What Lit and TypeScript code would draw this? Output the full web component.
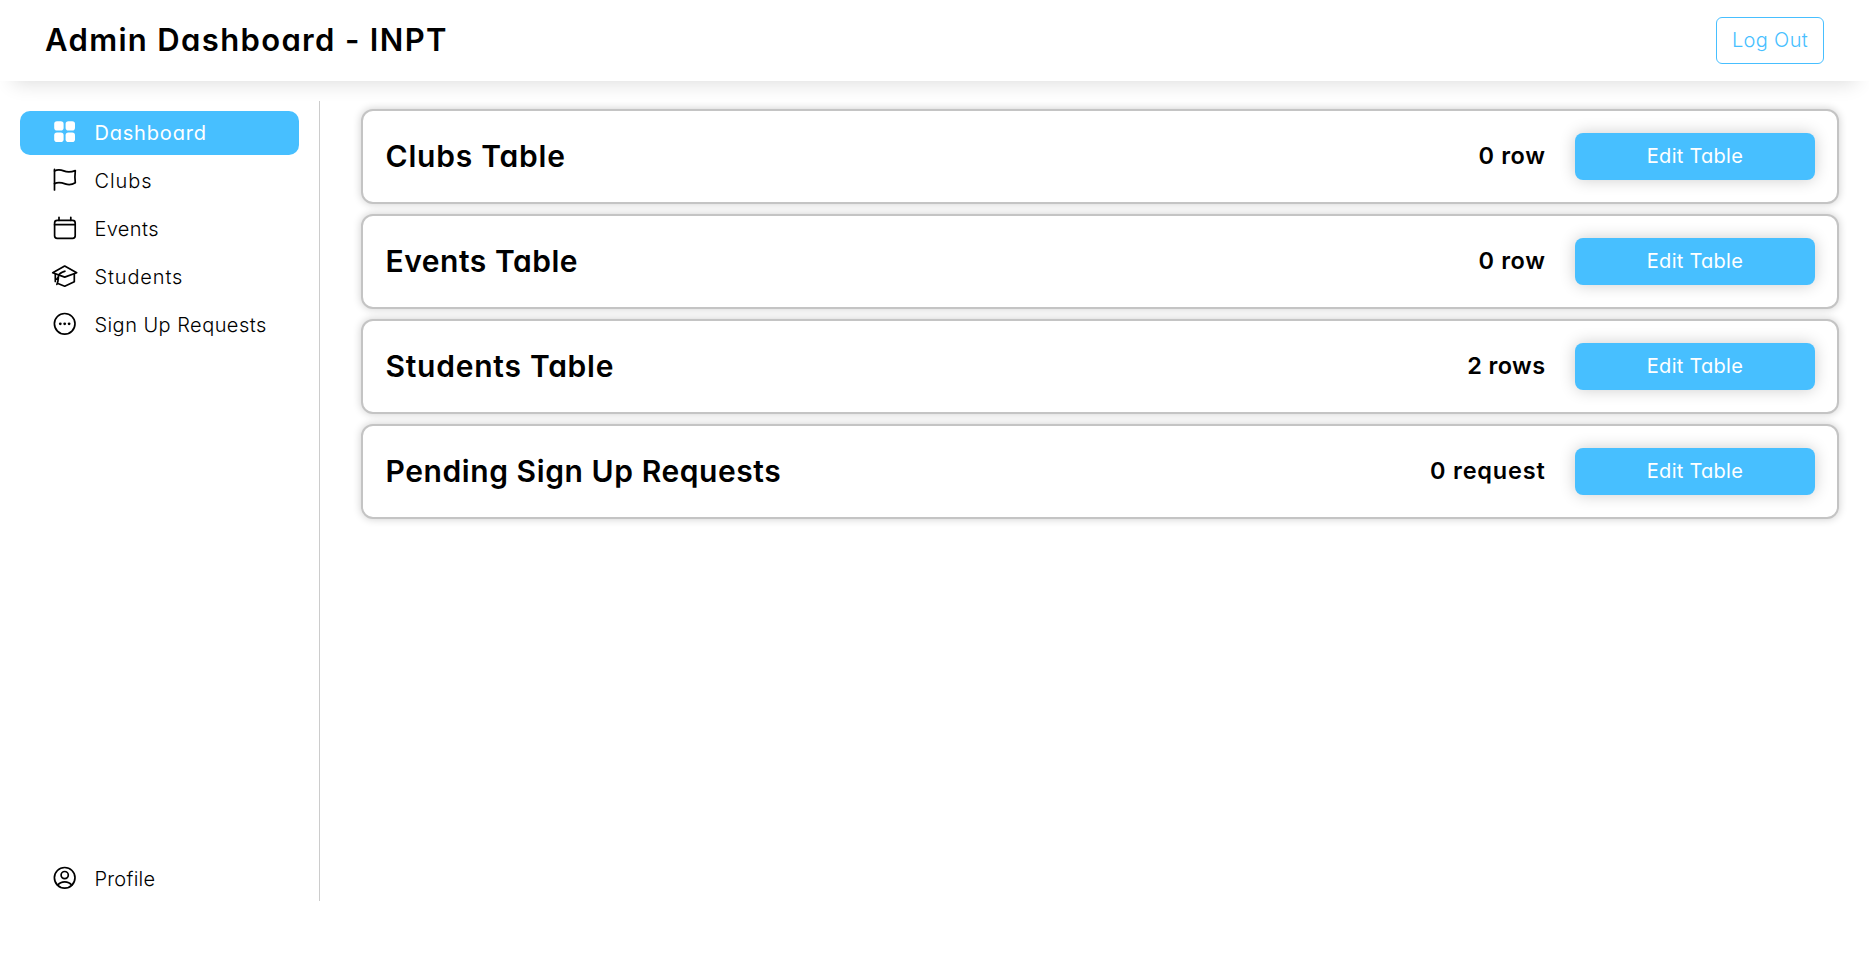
import { LitElement, html, css, svg, nothing } from "lit";
import { customElement, property, state } from "lit/decorators.js";
import { classMap } from "lit/directives/class-map.js";

type IconName = "grid" | "flag" | "calendar" | "cap" | "dots" | "user";

interface NavItem {
  label: string;
  icon: IconName;
  tracking: number;
}

interface TableSummary {
  title: string;
  count: string;
  tracking: number;
  countTracking: number;
}

const NAV: NavItem[] = [
  { label: "Dashboard", icon: "grid", tracking: 0.83 },
  { label: "Clubs", icon: "flag", tracking: 0.95 },
  { label: "Events", icon: "calendar", tracking: 0.4 },
  { label: "Students", icon: "cap", tracking: 0.87 },
  { label: "Sign Up Requests", icon: "dots", tracking: 0.46 },
];

const PROFILE: NavItem = { label: "Profile", icon: "user", tracking: 0.27 };

const TABLES: TableSummary[] = [
  { title: "Clubs Table", count: "0 row", tracking: 0.78, countTracking: 0.6 },
  { title: "Events Table", count: "0 row", tracking: 0.53, countTracking: 0.6 },
  { title: "Students Table", count: "2 rows", tracking: 0.75, countTracking: 0.4 },
  { title: "Pending Sign Up Requests", count: "0 request", tracking: 0.58, countTracking: 0.8 },
];

const ICONS = {
  grid: svg`
    <g fill="currentColor" stroke="none">
      <rect x="1.5" y="1.4" width="9.4" height="9.4" rx="2.8" />
      <rect x="12.9" y="1.4" width="9.4" height="9.4" rx="2.8" />
      <rect x="1.5" y="12.8" width="9.4" height="9.4" rx="2.8" />
      <rect x="12.9" y="12.8" width="9.4" height="9.4" rx="2.8" />
    </g>`,
  flag: svg`
    <path d="M1.8 1.6V22.2" />
    <path d="M1.8 3.1C4.6 1.7 8 1.9 11 3.1C14.5 4.6 18.5 4.4 22.6 2.8C22.1 6.8 22.1 10.8 22.6 14.9C19.5 16.9 16 17.3 12.5 16.1C8.5 14.7 5 14.4 1.8 15.8" />`,
  calendar: svg`
    <rect x="1.9" y="4.5" width="20.6" height="18.1" rx="2.6" />
    <path d="M1.9 8.9H22.5M6.3 1.5V4.5M18.1 1.5V4.5" />`,
  cap: svg`
    <path d="M12 2.2L24 8.9L12 13.3L0 8.9Z" />
    <path d="M2.6 10V17.6M5.8 20L12 22.4L21.6 18V10" />
    <path d="M12.2 7.4C9.4 8.4 6.8 9.2 5.9 11.6C5.4 14.4 5.9 17.4 4.2 20.6M5.9 12.6L4 15.4" />`,
  dots: svg`
    <circle cx="12" cy="12" r="10.3" />
    <g fill="currentColor" stroke="none">
      <circle cx="7.6" cy="12" r="1.4" /><circle cx="12" cy="12" r="1.4" /><circle cx="16.4" cy="12" r="1.4" />
    </g>`,
  user: svg`
    <circle cx="12" cy="12" r="10.3" />
    <circle cx="12" cy="9.3" r="3.6" />
    <path d="M4.9 19.4C6.6 17.2 9 16 12 16S17.4 17.2 19.1 19.4" />`,
};

@customElement("nav-link")
class NavLink extends LitElement {
  @property({ attribute: false }) item: NavItem = PROFILE;
  @property({ type: Boolean }) active = false;

  static styles = css`
    :host { display: block; }
    .link {
      box-sizing: border-box;
      height: 44px;
      padding-left: 33px;
      display: flex;
      align-items: center;
      gap: 17.4px;
      border-radius: 10px;
      color: #000;
      font-weight: 350;
      cursor: pointer;
    }
    .link.active {
      background: #47bfff;
      color: #fff;
      font-weight: 400;
    }
    .icon {
      flex: none;
      width: 24px;
      height: 24px;
      margin-bottom: 2px;
      overflow: visible;
      fill: none;
      stroke: currentColor;
      stroke-width: 1.7;
      stroke-linecap: round;
      stroke-linejoin: round;
    }
    .label { white-space: nowrap; }
  `;

  render() {
    return html`
      <a class=${classMap({ link: true, active: this.active })} aria-current=${this.active ? "page" : nothing}>
        <svg class="icon" viewBox="0.3 0.2 24 24">${ICONS[this.item.icon]}</svg>
        <span class="label" style="letter-spacing:${this.item.tracking}px">${this.item.label}</span>
      </a>`;
  }
}

@customElement("table-card")
class TableCard extends LitElement {
  @property({ attribute: false }) table: TableSummary = TABLES[0];

  static styles = css`
    :host { display: block; }
    .card {
      box-sizing: border-box;
      height: 95px;
      padding: 0 22px 0 22.5px;
      display: flex;
      align-items: center;
      border: 2px solid #c4c4c4;
      border-radius: 12px;
      background: #fff;
      box-shadow: 0 0 8px rgba(0, 0, 0, 0.2);
    }
    .title {
      margin: 0;
      flex: 1;
      font-size: 30px;
      font-weight: 600;
      padding-bottom: 1px;
    }
    .count {
      font-size: 23.5px;
      font-weight: 600;
      padding-bottom: 1px;
      margin-right: 29.5px;
    }
    .edit {
      box-sizing: border-box;
      width: 240px;
      height: 47px;
      padding: 0 0 2px;
      border: 0;
      border-radius: 8px;
      background: #47bfff;
      color: #fff;
      font: inherit;
      font-feature-settings: inherit;
      letter-spacing: 0.27px;
      box-shadow: 0 0 16px rgba(0, 0, 0, 0.2);
      cursor: pointer;
    }
  `;

  render() {
    const { title, count, tracking, countTracking } = this.table;
    return html`
      <article class="card">
        <h2 class="title" style="letter-spacing:${tracking}px">${title}</h2>
        <span class="count" style="letter-spacing:${countTracking}px">${count}</span>
        <button class="edit">Edit Table</button>
      </article>`;
  }
}

@customElement("app-root")
class AppRoot extends LitElement {
  @state() private current = "Dashboard";

  static styles = css`
    :host {
      display: block;
      min-height: 100vh;
      background: #fff;
      color: #000;
      font: 400 20px/1.5 Inter, sans-serif;
      font-feature-settings: "cv11";
    }
    .header {
      box-sizing: border-box;
      height: 81px;
      padding: 0 45px;
      display: flex;
      align-items: center;
      justify-content: space-between;
      box-shadow: 0 15px 20px -13px rgba(0, 0, 0, 0.14);
    }
    .brand {
      margin: 0;
      font-size: 31px;
      font-weight: 600;
      letter-spacing: 1.35px;
    }
    .logout {
      box-sizing: border-box;
      width: 108px;
      height: 47px;
      padding: 0 0 2px;
      border: 1px solid #47bfff;
      border-radius: 6px;
      background: #fff;
      color: #47bfff;
      font: inherit;
      font-feature-settings: inherit;
      font-weight: 350;
      letter-spacing: 0.35px;
      cursor: pointer;
    }
    .body {
      display: grid;
      grid-template-columns: 320px 1fr;
      padding-top: 20px;
    }
    .sidebar {
      box-sizing: border-box;
      height: 800px;
      padding: 10px 20px 0;
      display: flex;
      flex-direction: column;
      gap: 4px;
      border-right: 1px solid #ccc;
    }
    .profile { margin-top: auto; }
    .content {
      display: flex;
      flex-direction: column;
      gap: 10px;
      padding: 8px 30px 0 41px;
    }
  `;

  render() {
    return html`
      <header class="header">
        <h1 class="brand">Admin Dashboard - INPT</h1>
        <button class="logout">Log Out</button>
      </header>
      <div class="body">
        <nav class="sidebar">
          ${NAV.map((item) => html`
            <nav-link .item=${item} ?active=${item.label === this.current}
              @click=${() => (this.current = item.label)}></nav-link>`)}
          <nav-link class="profile" .item=${PROFILE}></nav-link>
        </nav>
        <main class="content">
          ${TABLES.map((table) => html`<table-card .table=${table}></table-card>`)}
        </main>
      </div>`;
  }
}
